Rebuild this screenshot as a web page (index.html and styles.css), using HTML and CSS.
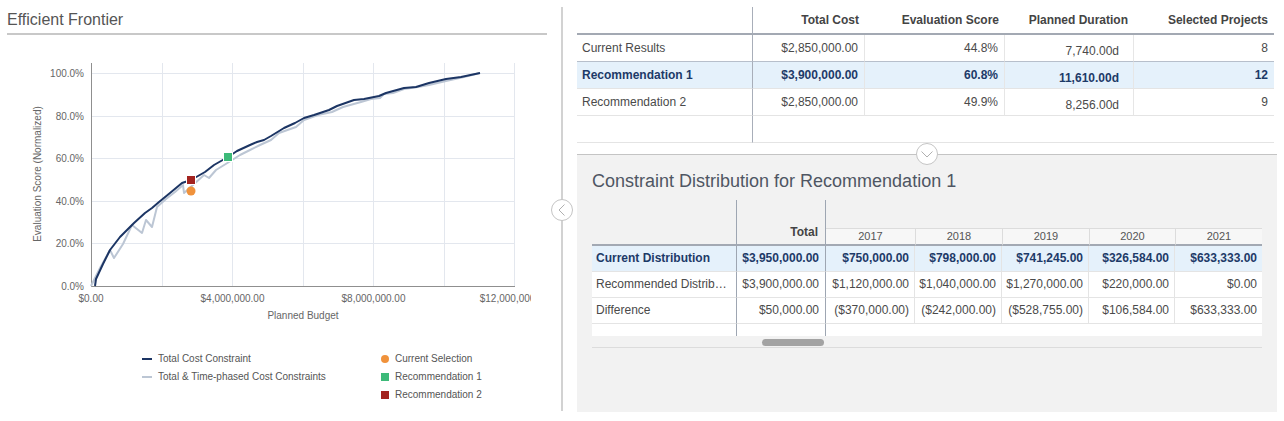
FILE: index.html
```html
<!DOCTYPE html>
<html lang="en">
<head>
<meta charset="utf-8">
<title>Efficient Frontier</title>
<link rel="stylesheet" href="styles.css">
</head>
<body>
<div class="page">
  <section class="left">
    <h2 class="ef-title">Efficient Frontier</h2>
    <svg class="chart" width="524" height="290" viewBox="7 35 524 290" xmlns="http://www.w3.org/2000/svg">
      <g class="grid">
        <path d="M91 73.5H515M91 116.5H515M91 158.5H515M91 201.5H515M91 243.5H515"/>
        <path d="M162.5 63V286M232.5 63V286M303.5 63V286M373.5 63V286M444.5 63V286M514.5 63V286"/>
      </g>
      <path class="axis" d="M91.5 63V287M91 286.5H515"/>
      <g class="ylab">
        <text x="84" y="76.5">100.0%</text>
        <text x="84" y="119.5">80.0%</text>
        <text x="84" y="161.5">60.0%</text>
        <text x="84" y="204.5">40.0%</text>
        <text x="84" y="246.5">20.0%</text>
        <text x="84" y="289.5">0.0%</text>
      </g>
      <g class="xlab">
        <text x="91" y="301.5">$0.00</text>
        <text x="232.5" y="301.5">$4,000,000.00</text>
        <text x="373.5" y="301.5">$8,000,000.00</text>
        <text x="514.5" y="301.5">$12,000,000.00</text>
      </g>
      <text class="xtitle" x="303" y="318.5">Planned Budget</text>
      <text class="ytitle" transform="translate(40.5,174) rotate(-90)">Evaluation Score (Normalized)</text>
      <polyline class="series-light" points="91,286 100,268 110,250 114,258 123,244 132,225 142,233 146,220 152,227 157,207 166,199 175,192 183,185 184,193 193,185 204,175 209,178 216,170 229,162 240,155 250,150 260,145 271,140 279,133 296,127 304,120 318,115 332,112 343,107 361,102 371,99 380,98 384,94 393,93 404,89 418,87 429,85 446,81 464,77 480,73"/>
      <polyline class="series-dark" points="95,286 96,279 103,264 110,250 120,237 127,230 134,223 145,213 152,208 159,202 170,193 182,183 191,180 205,172 214,165 228,157 237,151 250,145 257,142 264,140 271,136 284,128 295,123 304,118 314,115 329,110 337,106 354,100 364,99 379,96 386,93 404,88 416,87 429,83 446,79 461,77 480,73"/>
      <circle class="pt-current" cx="191" cy="191" r="4.5"/>
      <rect class="pt-rec2" x="186.5" y="175.5" width="9" height="9"/>
      <rect class="pt-rec1" x="223.5" y="152.5" width="9" height="9"/>
    </svg>
    <div class="legend">
      <div class="legend-col legend-col-a">
        <div class="legend-item"><span class="mk mk-line mk-dark"></span>Total Cost Constraint</div>
        <div class="legend-item"><span class="mk mk-line mk-light"></span>Total &amp; Time-phased Cost Constraints</div>
      </div>
      <div class="legend-col">
        <div class="legend-item"><span class="mk mk-dot"></span>Current Selection</div>
        <div class="legend-item"><span class="mk mk-sq mk-green"></span>Recommendation 1</div>
        <div class="legend-item"><span class="mk mk-sq mk-red"></span>Recommendation 2</div>
      </div>
    </div>
  </section>

  <div class="divider">
    <span class="toggle toggle-left">
      <svg width="22" height="22" viewBox="0 0 22 22"><circle cx="11" cy="11" r="10.5" class="tg-circle"/><polyline points="13.5,5.5 8,11 13.5,16.5" class="tg-chev"/></svg>
    </span>
  </div>

  <section class="right">
    <table class="results">
      <colgroup>
        <col class="w176"><col class="w112"><col class="w140"><col class="w129"><col class="w140">
      </colgroup>
      <thead>
        <tr>
          <th class="c-first"></th>
          <th>Total Cost</th>
          <th>Evaluation Score</th>
          <th>Planned Duration</th>
          <th>Selected Projects</th>
        </tr>
      </thead>
      <tbody>
        <tr class="before-hl">
          <td class="c-first">Current Results</td>
          <td class="c-sep">$2,850,000.00</td>
          <td class="c-sep">44.8%</td>
          <td class="c-sep c-dur">7,740.00d</td>
          <td>8</td>
        </tr>
        <tr class="hl">
          <td class="c-first">Recommendation 1</td>
          <td class="c-sep">$3,900,000.00</td>
          <td class="c-sep">60.8%</td>
          <td class="c-sep c-dur">11,610.00d</td>
          <td>12</td>
        </tr>
        <tr>
          <td class="c-first">Recommendation 2</td>
          <td class="c-sep">$2,850,000.00</td>
          <td class="c-sep">49.9%</td>
          <td class="c-sep c-dur">8,256.00d</td>
          <td>9</td>
        </tr>
        <tr class="filler">
          <td class="c-first"></td><td></td><td></td><td></td><td></td>
        </tr>
      </tbody>
    </table>

    <div class="dist-panel">
      <span class="toggle toggle-top">
        <svg width="22" height="22" viewBox="0 0 22 22"><circle cx="11" cy="11" r="10.5" class="tg-circle"/><polyline points="5.5,8.5 11,14 16.5,8.5" class="tg-chev"/></svg>
      </span>
      <h3 class="dist-title">Constraint Distribution for Recommendation 1</h3>
      <div class="dist-wrap">
        <table class="dist">
          <colgroup>
            <col class="w145"><col class="w89"><col class="w89"><col class="w87"><col class="w87"><col class="w86"><col class="w87">
          </colgroup>
          <thead>
            <tr>
              <th class="d-first" rowspan="2"></th>
              <th class="d-total" rowspan="2">Total</th>
              <th class="d-group" colspan="5"></th>
            </tr>
            <tr>
              <th class="d-yr d-yr-first">2017</th>
              <th class="d-yr">2018</th>
              <th class="d-yr">2019</th>
              <th class="d-yr">2020</th>
              <th class="d-yr">2021</th>
            </tr>
          </thead>
          <tbody>
            <tr class="hl">
              <td class="d-first">Current Distribution</td>
              <td class="d-total">$3,950,000.00</td>
              <td class="d-y">$750,000.00</td>
              <td class="d-y">$798,000.00</td>
              <td class="d-y">$741,245.00</td>
              <td class="d-y">$326,584.00</td>
              <td class="d-y d-last">$633,333.00</td>
            </tr>
            <tr>
              <td class="d-first">Recommended Distribution</td>
              <td class="d-total">$3,900,000.00</td>
              <td class="d-y">$1,120,000.00</td>
              <td class="d-y">$1,040,000.00</td>
              <td class="d-y">$1,270,000.00</td>
              <td class="d-y">$220,000.00</td>
              <td class="d-y d-last">$0.00</td>
            </tr>
            <tr>
              <td class="d-first">Difference</td>
              <td class="d-total">$50,000.00</td>
              <td class="d-y">($370,000.00)</td>
              <td class="d-y">($242,000.00)</td>
              <td class="d-y">($528,755.00)</td>
              <td class="d-y">$106,584.00</td>
              <td class="d-y d-last">$633,333.00</td>
            </tr>
            <tr class="d-filler">
              <td class="d-first"></td><td class="d-total"></td><td></td><td></td><td></td><td></td><td></td>
            </tr>
          </tbody>
        </table>
        <div class="hscroll"><span class="thumb"></span></div>
      </div>
    </div>
  </section>
</div>
</body>
</html>
```

FILE: styles.css
```css
html, body {
  margin: 0;
  padding: 0;
  background: #fff;
}
body {
  font-family: "Liberation Sans", Arial, sans-serif;
  color: #444;
}
.page {
  display: flex;
  width: 1284px;
  height: 421px;
  overflow: hidden;
}

/* ---------- left: chart ---------- */
.left {
  flex: none;
  width: 561px;
  padding-left: 7px;
  box-sizing: border-box;
}
.ef-title {
  margin: 0;
  width: 540px;
  padding-top: 10px;
  height: 23px;
  line-height: 20px;
  font-size: 16px;
  font-weight: normal;
  color: #555;
  border-bottom: 2px solid #c8c8c8;
}
.chart {
  display: block;
}
.chart text {
  font-family: "Liberation Sans", Arial, sans-serif;
  font-size: 10px;
  fill: #666;
}
.grid path {
  stroke: #e3e7ee;
  stroke-width: 1;
  fill: none;
}
.axis {
  stroke: #8f8f8f;
  stroke-width: 1;
  fill: none;
}
.ylab text { text-anchor: end; }
.xlab text { text-anchor: middle; }
.xtitle { text-anchor: middle; }
.ytitle { text-anchor: middle; }
.series-light {
  fill: none;
  stroke: #bcc6d4;
  stroke-width: 2;
  stroke-linejoin: round;
}
.series-dark {
  fill: none;
  stroke: #1c3564;
  stroke-width: 2;
  stroke-linejoin: round;
}
.pt-current { fill: #f0923b; }
.pt-rec2 { fill: #a3231f; stroke: #fff; stroke-width: 1; }
.pt-rec1 { fill: #3dba79; stroke: #fff; stroke-width: 1; }

.legend {
  display: flex;
  margin-top: 25px;
  padding-left: 135px;
  font-size: 10px;
  line-height: 18px;
  color: #555;
}
.legend-col-a { width: 239px; }
.legend-item {
  display: flex;
  align-items: center;
  height: 18px;
}
.mk {
  flex: none;
  margin-right: 6px;
}
.mk-line { width: 10px; height: 2px; }
.mk-dark { background: #1c3564; }
.mk-light { background: #bcc6d4; }
.mk-dot { width: 8px; height: 8px; border-radius: 50%; background: #f0923b; }
.mk-sq { width: 8px; height: 8px; }
.mk-green { background: #3dba79; }
.mk-red { background: #a3231f; }

/* ---------- divider ---------- */
.divider {
  flex: none;
  position: relative;
  width: 2px;
  margin-top: 7px;
  height: 404px;
  background: #d2d2d2;
}
.toggle {
  position: absolute;
  display: block;
  width: 22px;
  height: 22px;
}
.toggle svg { display: block; }
.tg-circle { fill: #fff; stroke: #c4c4c4; stroke-width: 1; }
.tg-chev { fill: none; stroke: #b0b0b0; stroke-width: 1; }
.toggle-left {
  left: -10px;
  top: 192px;
}

/* ---------- right ---------- */
.right {
  flex: none;
  width: 700px;
  margin-left: 14px;
}
.results {
  margin-top: 7px;
  width: 697px;
  table-layout: fixed;
  border-collapse: separate;
  border-spacing: 0;
  font-size: 12px;
}
.w176 { width: 176px; }
.w112 { width: 112px; }
.w140 { width: 140px; }
.w129 { width: 129px; }
.w145 { width: 145px; }
.w89 { width: 89px; }
.w87 { width: 87px; }
.w86 { width: 86px; }

.results th {
  padding: 0 6px;
  line-height: 26px;
  text-align: right;
  font-weight: bold;
  color: #444;
  border-bottom: 2px solid #a3a9b3;
  white-space: nowrap;
}
.results td {
  padding: 0 6px;
  line-height: 26px;
  text-align: right;
  color: #4a4a4a;
  border-bottom: 1px solid #e4e4e4;
  white-space: nowrap;
}
.results .c-first {
  text-align: left;
  padding-left: 5px;
  border-right: 1px solid #a8aeb9;
}
.results td.c-sep { border-right: 1px solid #e6e6e6; }
.results td.c-dur {
  line-height: 20px;
  padding-top: 6px;
  padding-right: 14px;
  vertical-align: top;
}
.results tr.before-hl td { border-bottom-color: #b7bfcb; }
.results tr.hl td {
  background: #e5f1fb;
  color: #1d3a68;
  font-weight: bold;
}
.results tr.filler td { height: 26px; }

.dist-panel {
  position: relative;
  margin-top: 11px;
  height: 257px;
  padding: 0 15px;
  background: #f2f2f2;
  border-top: 1px solid #c4c4c4;
}
.toggle-top {
  top: -12px;
  left: 50%;
  margin-left: -11px;
}
.dist-title {
  margin: 0;
  padding-top: 15px;
  font-size: 18px;
  line-height: 22px;
  font-weight: normal;
  color: #4f5663;
}
.dist-wrap {
  margin-top: 8px;
  width: 670px;
}
.dist {
  width: 670px;
  table-layout: fixed;
  border-collapse: separate;
  border-spacing: 0;
  font-size: 12px;
}
.dist th {
  padding: 0;
  font-weight: normal;
}
.dist th.d-first {
  border-right: 1px solid #9ea6b2;
  border-bottom: 2px solid #a3a9b3;
}
.dist th.d-total {
  text-align: right;
  vertical-align: bottom;
  padding: 0 7px 5px 0;
  line-height: 14px;
  font-weight: bold;
  color: #444;
  border-right: 1px solid #9ea6b2;
  border-bottom: 2px solid #a3a9b3;
}
.dist th.d-group {
  height: 28px;
}
.dist th.d-yr {
  line-height: 15px;
  font-size: 11px;
  color: #555;
  text-align: center;
  background: #f7f7f7;
  border-top: 1px solid #dcdcdc;
  border-left: 1px solid #dcdcdc;
  border-bottom: 2px solid #a3a9b3;
}
.dist th.d-yr-first { border-left: none; }
.dist td {
  padding: 0 5px 0 0;
  line-height: 25px;
  text-align: right;
  color: #4a4a4a;
  background: #fff;
  border-bottom: 1px solid #e4e4e4;
  white-space: nowrap;
}
.dist td.d-first {
  text-align: left;
  padding: 0 8px 0 4px;
  overflow: hidden;
  text-overflow: ellipsis;
  border-right: 1px solid #9ea6b2;
}
.dist td.d-total {
  padding-right: 6px;
  border-right: 1px solid #9ea6b2;
}
.dist td.d-y { border-right: 1px solid #e4e4e4; }
.dist td.d-last { border-right: none; }
.dist tr.hl td {
  background: #e5f1fb;
  color: #1d3a68;
  font-weight: bold;
}
.dist tr.d-filler td {
  height: 12px;
  line-height: 12px;
  border-bottom: none;
}
.hscroll {
  height: 12px;
  padding-top: 3px;
  box-sizing: border-box;
  border-bottom: 1px solid #dcdcdc;
}
.thumb {
  display: block;
  margin-left: 170px;
  width: 62px;
  height: 7px;
  border-radius: 4px;
  background: #a3a3a3;
}
```
